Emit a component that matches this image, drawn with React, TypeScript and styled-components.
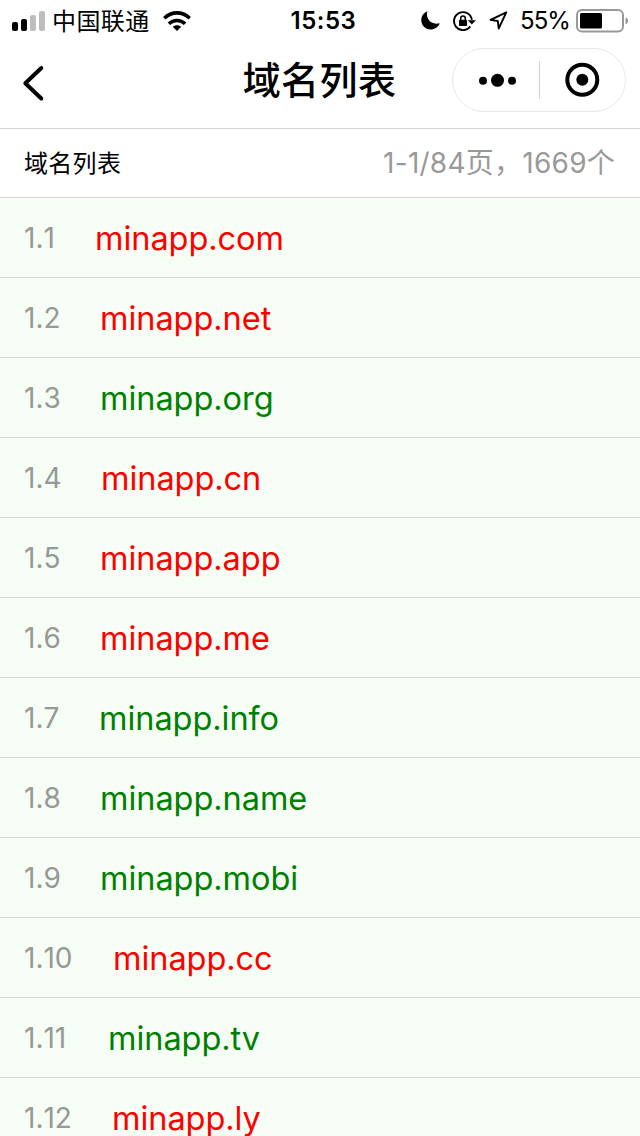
import React from 'react';
import styled, { createGlobalStyle } from 'styled-components';

const GlobalStyle = createGlobalStyle`
  * { box-sizing: border-box; }
  body {
    margin: 0;
    background: #fff;
    color: #000;
    font-family: Inter, 'Noto Sans CJK SC', sans-serif;
    overflow: hidden;
  }
`;

const Screen = styled.main`
  width: 640px;
  height: 1136px;
  overflow: hidden;
  display: flex;
  flex-direction: column;
`;

const StatusBar = styled.header`
  height: 40px;
  flex: none;
  display: grid;
  grid-template-columns: 1fr auto 1fr;
  align-items: center;
  padding: 0 11px 0 12px;
`;

const StatusGroup = styled.div<{ $end?: boolean }>`
  display: flex;
  align-items: center;
  justify-content: ${(p) => (p.$end ? 'flex-end' : 'flex-start')};
  height: 40px;
`;

const Carrier = styled.span`
  font-size: 24px;
  line-height: 40px;
  padding-top: 2px;
  margin: 0 13px 0 7px;
  letter-spacing: 0.4px;
`;

const Clock = styled.time`
  font-size: 24px;
  font-weight: 600;
  line-height: 40px;
  letter-spacing: 0.5px;
  padding: 1px 0 0 6px;
`;

const Percent = styled.span`
  font-size: 24px;
  line-height: 40px;
  padding-top: 1px;
  letter-spacing: -0.9px;
`;

const NavBar = styled.nav`
  height: 89px;
  flex: none;
  border-bottom: 1px solid #d4d4d4;
  display: grid;
  grid-template-columns: 188px 1fr 188px;
  padding-top: 8px;
`;

const BackButton = styled.button`
  border: 0;
  background: none;
  padding: 0 0 0 20px;
  height: 70px;
  display: flex;
  align-items: center;
`;

const Title = styled.h1`
  margin: 0;
  font-size: 38px;
  font-weight: 500;
  line-height: 64px;
  letter-spacing: 0.4px;
  padding-right: 1px;
  text-align: center;
`;

const Capsule = styled.div`
  width: 174px;
  height: 64px;
  border: 1px solid #e8e8e8;
  border-radius: 32px;
  display: flex;
  align-items: center;
`;

const CapsuleButton = styled.button`
  flex: 1;
  border: 0;
  background: none;
  padding: 0;
  display: flex;
  justify-content: center;
`;

const CapsuleRule = styled.span`
  width: 1px;
  height: 38px;
  background: #cfcfcf;
`;

const Summary = styled.section`
  height: 69px;
  flex: none;
  border-bottom: 1px solid #d4d8d4;
  display: flex;
  align-items: center;
  justify-content: space-between;
  padding: 0 25px 0 24px;
`;

const SummaryTitle = styled.h2`
  margin: 0;
  font-size: 24px;
  font-weight: 400;
  line-height: 68px;
  letter-spacing: 0.3px;
  padding-top: 1px;
`;

const SummaryCount = styled.span`
  font-size: 28px;
  line-height: 68px;
  letter-spacing: 0.25px;
  color: #999;
`;

const List = styled.ul`
  margin: 0;
  padding: 0;
  list-style: none;
`;

const Row = styled.li`
  height: 80px;
  display: flex;
  background: #f5fdf5;
  border-bottom: 1px solid #d3dbd3;
  padding-left: 24px;
`;

const Index = styled.span<{ $width: number }>`
  width: ${(p) => p.$width}px;
  flex: none;
  font-size: 28px;
  line-height: 81px;
  font-kerning: none;
  letter-spacing: 0;
  color: #969996;
`;

const Domain = styled.span<{ $taken: boolean }>`
  font-size: 32.5px;
  line-height: 82px;
  letter-spacing: -0.05px;
  padding-left: 1px;
  color: ${(p) => (p.$taken ? '#fc0000' : '#008000')};
`;

type Entry = { no: string; name: string; taken: boolean; width: number };

const entries: Entry[] = [
  { no: '1.1', name: 'minapp.com', taken: true, width: 70 },
  { no: '1.2', name: 'minapp.net', taken: true, width: 75 },
  { no: '1.3', name: 'minapp.org', taken: false, width: 75 },
  { no: '1.4', name: 'minapp.cn', taken: true, width: 76 },
  { no: '1.5', name: 'minapp.app', taken: true, width: 75 },
  { no: '1.6', name: 'minapp.me', taken: true, width: 75 },
  { no: '1.7', name: 'minapp.info', taken: false, width: 74 },
  { no: '1.8', name: 'minapp.name', taken: false, width: 75 },
  { no: '1.9', name: 'minapp.mobi', taken: false, width: 75 },
  { no: '1.10', name: 'minapp.cc', taken: true, width: 88 },
  { no: '1.11', name: 'minapp.tv', taken: false, width: 83 },
  { no: '1.12', name: 'minapp.ly', taken: true, width: 87 },
];

const SignalIcon = () => (
  <svg width="33" height="20" viewBox="0 0 33 20">
    <rect x="0" y="11" width="6" height="9" rx="2" />
    <rect x="9" y="8" width="6" height="12" rx="2" />
    <rect x="18" y="4" width="6" height="16" rx="2" fill="#bdbdbd" />
    <rect x="27" y="0" width="6" height="20" rx="2" fill="#bdbdbd" />
  </svg>
);

const WifiIcon = () => (
  <svg width="28" height="20" viewBox="0 0 28 20" fill="none" stroke="#000" strokeWidth="3.6">
    <path d="M1.3 7.2C8.5.1 19.5.1 26.7 7.2" />
    <path d="M5.9 12.8C10.5 8.3 17.5 8.3 22.1 12.8" />
    <path d="M14 20l-4.3-4.3c2.4-2.1 6.2-2.1 8.6 0z" fill="#000" stroke="none" />
  </svg>
);

const MoonIcon = () => (
  <svg width="19" height="19" viewBox="0 0 19 19">
    <path d="M6.3.3C4.4 7.7 10 14.5 18.7 12.2 17.2 16.1 13.6 18.5 9.6 18.5 4.5 18.5.3 14.4.3 9.3.3 5.2 2.6 1.8 6.3.3z" />
  </svg>
);

const RotationLockIcon = () => (
  <svg width="23" height="20" viewBox="0 0 23 20" fill="none" stroke="#000" strokeWidth="1.9">
    <path d="M17.3 15.4A9 9 0 1 1 18.9 8.8" />
    <path d="M14.8 9.3h8.2l-4.1 4.3z" fill="#000" stroke="none" />
    <rect x="6" y="8.7" width="8" height="6.2" rx="0.9" fill="#000" stroke="none" />
    <path d="M7.7 9V7.3a2.3 2.3 0 0 1 4.6 0V9" strokeWidth="1.5" />
  </svg>
);

const LocationIcon = () => (
  <svg width="19" height="19" viewBox="0 0 19 19" fill="none" stroke="#000" strokeWidth="1.9" strokeLinejoin="round">
    <path d="M17.3 1.3L1.5 8.9l7.3 1.1.9 7.5z" />
  </svg>
);

const BatteryIcon = () => (
  <svg width="53" height="24" viewBox="0 0 53 24">
    <rect x="1" y="1" width="46" height="21.5" rx="5" fill="none" stroke="#999" strokeWidth="2" />
    <rect x="4" y="4" width="22" height="15.5" rx="1.5" />
    <path d="M49.5 8.5c3.5 1 3.5 5.800 0 6.8z" fill="#999" />
  </svg>
);

const StatusIcons = styled.div`
  display: flex;
  align-items: center;
  gap: 13px;
  margin-right: 12px;
`;

const BatterySlot = styled.span`
  display: flex;
  margin-left: 6px;
`;

export default function App() {
  return (
    <>
      <GlobalStyle />
      <Screen>
        <StatusBar>
          <StatusGroup>
            <SignalIcon />
            <Carrier>中国联通</Carrier>
            <WifiIcon />
          </StatusGroup>
          <Clock>15:53</Clock>
          <StatusGroup $end>
            <StatusIcons>
              <MoonIcon />
              <RotationLockIcon />
              <LocationIcon />
            </StatusIcons>
            <Percent>55%</Percent>
            <BatterySlot>
              <BatteryIcon />
            </BatterySlot>
          </StatusGroup>
        </StatusBar>
        <NavBar>
          <BackButton aria-label="返回">
            <svg width="26" height="38" viewBox="0 0 26 38" fill="none" stroke="#000" strokeWidth="4" strokeLinecap="round" strokeLinejoin="round">
              <path d="M21.3 4L5.3 19.2l16 15.3" />
            </svg>
          </BackButton>
          <Title>域名列表</Title>
          <Capsule>
            <CapsuleButton aria-label="更多">
              <svg width="42" height="14" viewBox="0 0 42 14">
                <circle cx="8" cy="7.7" r="4" />
                <circle cx="22.5" cy="7.3" r="6.5" />
                <circle cx="37" cy="7.7" r="4" />
              </svg>
            </CapsuleButton>
            <CapsuleRule />
            <CapsuleButton aria-label="关闭">
              <svg width="36" height="36" viewBox="0 0 36 36">
                <circle cx="18.3" cy="17.7" r="15" fill="none" stroke="#000" strokeWidth="4" />
                <circle cx="18.3" cy="17.7" r="6" />
              </svg>
            </CapsuleButton>
          </Capsule>
        </NavBar>
        <Summary>
          <SummaryTitle>域名列表</SummaryTitle>
          <SummaryCount>1-1/84页，1669个</SummaryCount>
        </Summary>
        <List>
          {entries.map((e) => (
            <Row key={e.no}>
              <Index $width={e.width}>{e.no}</Index>
              <Domain $taken={e.taken}>{e.name}</Domain>
            </Row>
          ))}
        </List>
      </Screen>
    </>
  );
}
